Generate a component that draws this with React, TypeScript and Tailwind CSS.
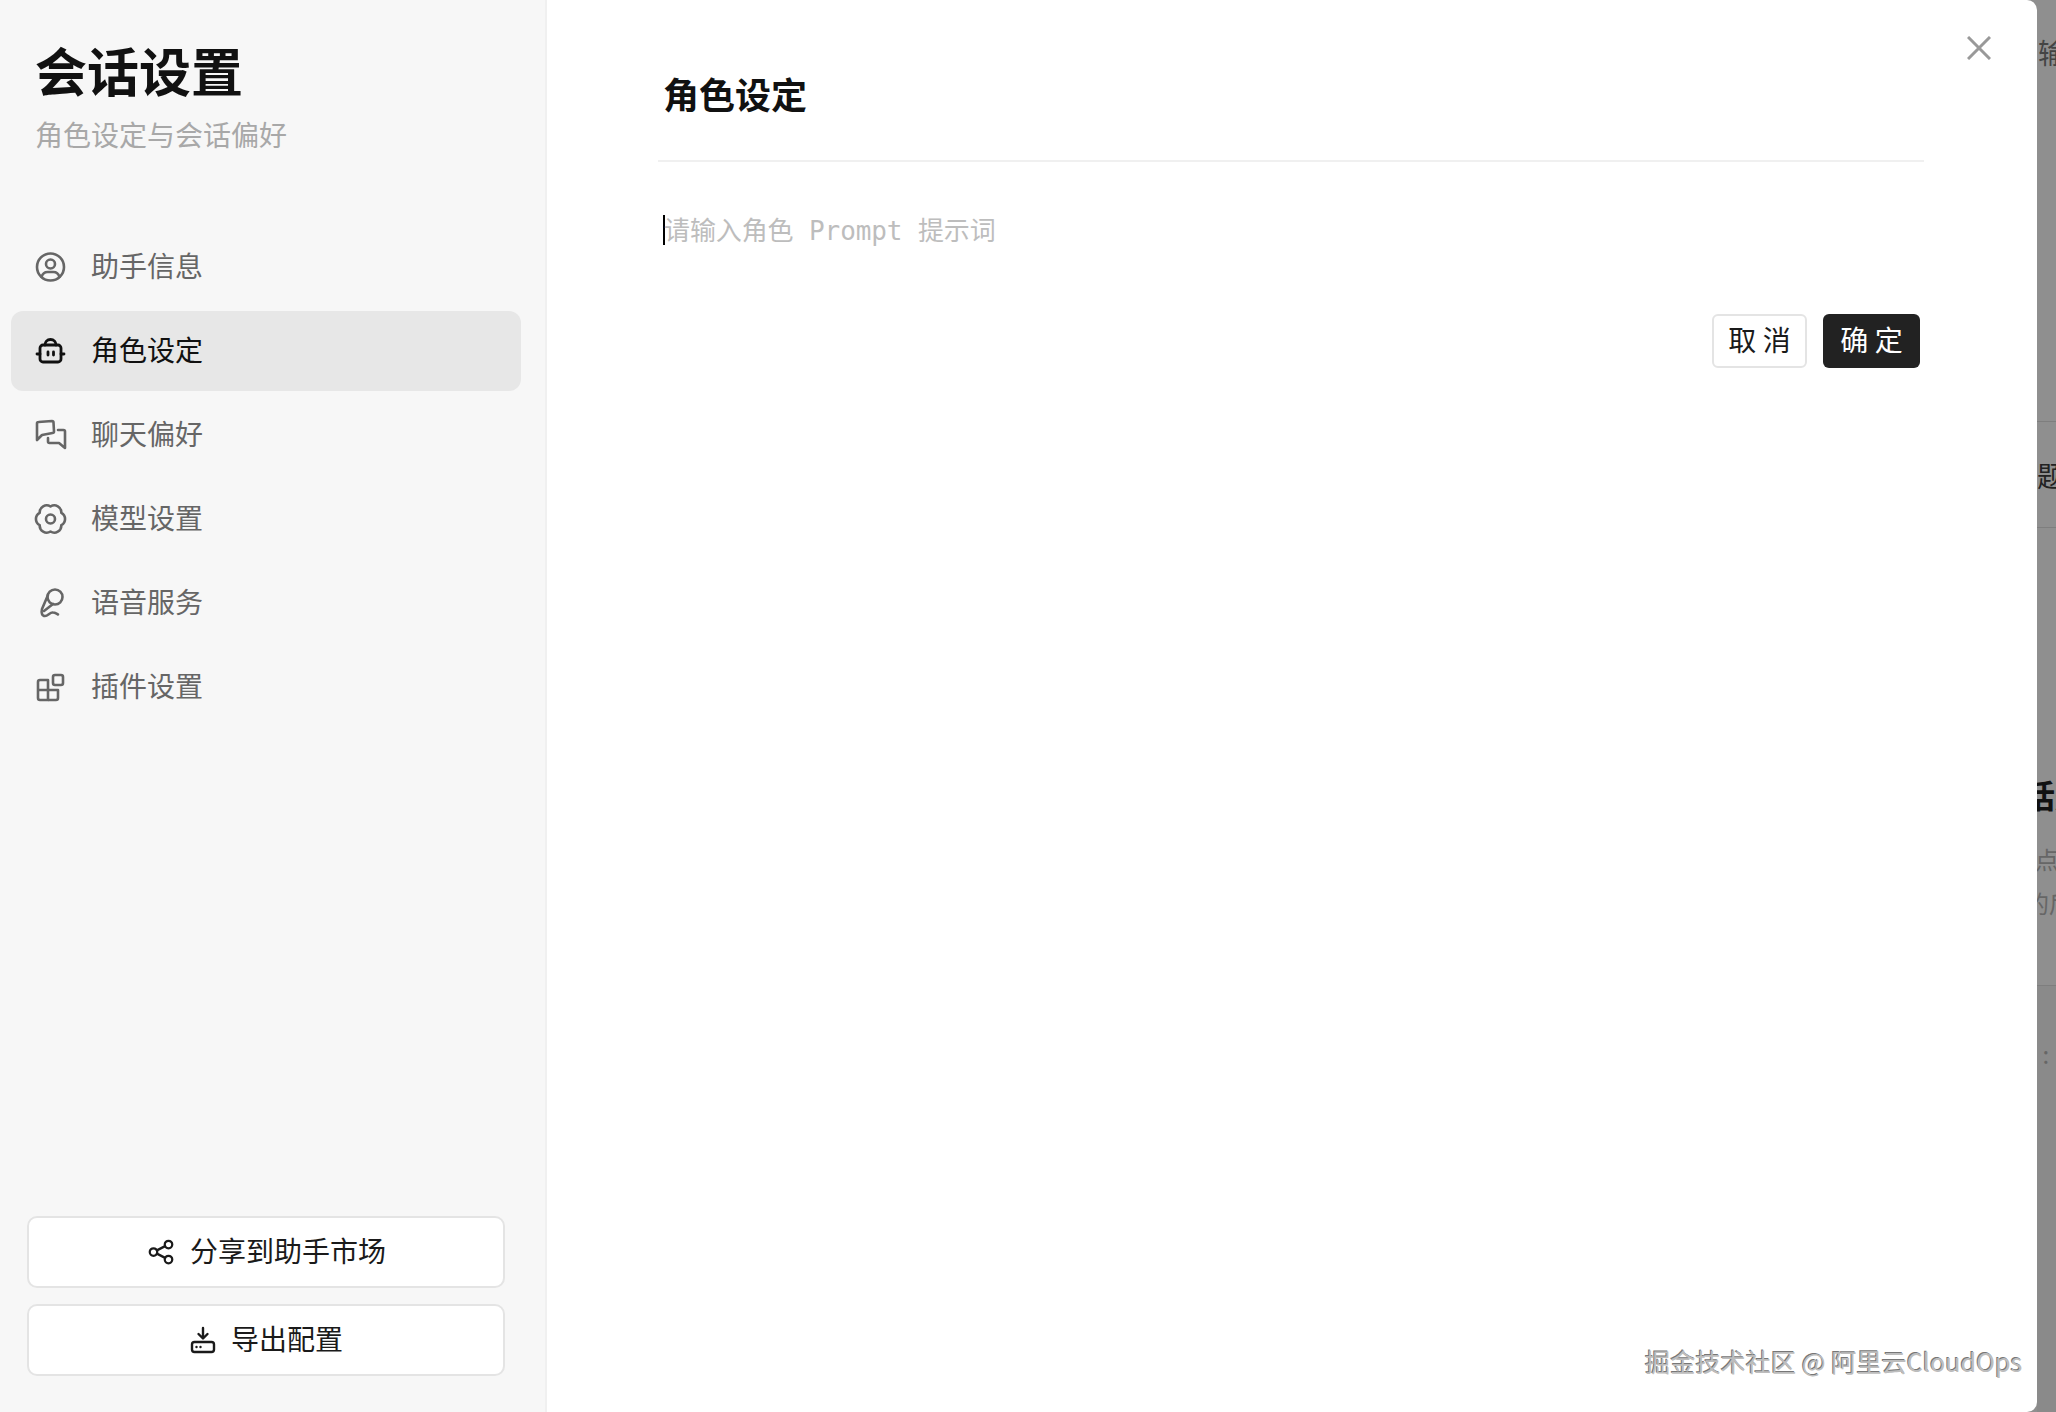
import { TbShare } from 'react-icons/tb';

const CJK = "font-['Noto_Sans_CJK_SC','Noto_Sans',sans-serif]";

type IconProps = { className?: string };

function UserIcon({ className }: IconProps) {
  return (
    <svg viewBox="0 0 36 36" fill="none" stroke="currentColor" strokeWidth="2.600" strokeLinecap="round" strokeLinejoin="round" className={className}>
      <circle cx="19.500" cy="18" r="13.500" />
      <circle cx="19.500" cy="15" r="4.500" />
      <path d="M10.500 28c1-3 3.500-5 6-5h6c2.500 0 5 2 6 5" />
    </svg>
  );
}

function RobotIcon({ className }: IconProps) {
  return (
    <svg viewBox="0 0 36 36" fill="none" stroke="currentColor" strokeWidth="2.800" strokeLinecap="round" strokeLinejoin="round" className={className}>
      <rect x="9" y="12" width="21" height="17" rx="3" />
      <path d="M14 12c0-3 2-5.500 5.500-5.500S25 9 25 12" />
      <path d="M6 21h3M30 21h3M17 19v3M22.500 19v3" />
    </svg>
  );
}

function ChatIcon({ className }: IconProps) {
  return (
    <svg viewBox="0 0 36 36" fill="none" stroke="currentColor" strokeWidth="2.600" strokeLinecap="round" strokeLinejoin="round" className={className}>
      <path d="M6 23V6.500C6 5.500 6.500 5 7.500 5L21 4c1 0 1.500.5 1.500 1.500l.5 9c0 1-.5 1.500-1.500 1.500L11 18z" />
      <path d="M27 13h5.500c1 0 1.500.5 1.500 1.500V31l-6-5H18.500c-1 0-1.500-.5-1.500-1.500V21" />
    </svg>
  );
}

function GearIcon({ className }: IconProps) {
  return (
    <svg viewBox="0 0 36 36" fill="none" stroke="currentColor" strokeWidth="2.600" strokeLinejoin="round" className={className}>
      <path d="M19.500 5.500A7 7 0 0 1 30.300 11.800A7 7 0 0 1 30.300 24.200A7 7 0 0 1 19.500 30.500A7 7 0 0 1 8.700 24.200A7 7 0 0 1 8.700 11.800A7 7 0 0 1 19.500 5.500Z" />
      <circle cx="19.500" cy="18" r="4.500" />
    </svg>
  );
}

function MicIcon({ className }: IconProps) {
  return (
    <svg viewBox="0 0 36 36" fill="none" stroke="currentColor" strokeWidth="2.600" strokeLinecap="round" strokeLinejoin="round" className={className}>
      <circle cx="24" cy="12" r="7.500" />
      <path d="M17 10l-6 14c-1 4 0 7 3 7s5-4 8-3.500c2 0 3 1 5 2" />
      <path d="M13 26l9-7" />
    </svg>
  );
}

function PluginIcon({ className }: IconProps) {
  return (
    <svg viewBox="0 0 36 36" fill="none" stroke="currentColor" strokeWidth="2.600" strokeLinejoin="round" className={className}>
      <path d="M9 11h8v20H9a2 2 0 0 1-2-2V13a2 2 0 0 1 2-2z" />
      <path d="M7 21h20v8a2 2 0 0 1-2 2h-8" />
      <rect x="22" y="6" width="10" height="10" rx="2" />
    </svg>
  );
}

function ExportIcon({ className }: IconProps) {
  return (
    <svg viewBox="0 0 28 28" fill="none" stroke="currentColor" strokeWidth="2.400" strokeLinecap="round" strokeLinejoin="round" className={className}>
      <path d="M14 2v10M9.500 8l4.500 4.500L18.500 8" />
      <rect x="3" y="16" width="22" height="10" rx="2.500" />
      <path d="M7.500 21h.01M11.500 21h.01" />
    </svg>
  );
}

const NAV = [
  { label: '助手信息', Icon: UserIcon },
  { label: '角色设定', Icon: RobotIcon, active: true },
  { label: '聊天偏好', Icon: ChatIcon },
  { label: '模型设置', Icon: GearIcon },
  { label: '语音服务', Icon: MicIcon },
  { label: '插件设置', Icon: PluginIcon },
];

export default function App() {
  return (
    <div className={`relative flex h-[1412px] w-[2056px] overflow-hidden bg-[#8f8f8f] ${CJK}`}>
      {/* Drawer */}
      <div className="flex h-full w-[2037px] shrink-0 overflow-hidden rounded-r-[10px] bg-white">
        <aside className="flex h-full w-[547px] shrink-0 flex-col border-r-2 border-[#f0f0f0] bg-[#f7f7f7]">
          <div className="pl-[35px] pt-[36px]">
            <h1 className="text-[52px] font-bold leading-[68px] text-[#111]">会话设置</h1>
            <p className="mt-[10px] text-[28px] leading-[40px] text-[#a8a8a8]">角色设定与会话偏好</p>
          </div>

          <nav className="ml-[11px] mt-[73px] flex w-[510px] flex-col gap-[4px]">
            {NAV.map(({ label, Icon, active }) => (
              <div
                key={label}
                className={`flex h-[80px] items-center gap-[24px] rounded-[12px] pl-[20px] ${active ? 'bg-[#e7e7e7] text-[#111]' : 'text-[#666]'}`}
              >
                <Icon className="h-[36px] w-[36px] shrink-0" />
                <span className="pb-[4px] text-[28px] leading-[40px]">{label}</span>
              </div>
            ))}
          </nav>

          <div className="ml-[27px] mt-auto mb-[36px] flex w-[478px] flex-col gap-[16px]">
            <button className="flex h-[72px] items-center justify-center gap-[14px] rounded-[10px] border-2 border-[#e4e4e4] bg-white text-[28px] text-[#1a1a1a]">
              <TbShare strokeWidth={1.800} className="h-[30px] w-[30px]" />
              <span className="pb-[4px]">分享到助手市场</span>
            </button>
            <button className="flex h-[72px] items-center justify-center gap-[14px] rounded-[10px] border-2 border-[#e4e4e4] bg-white text-[28px] text-[#1a1a1a]">
              <ExportIcon className="h-[28px] w-[28px]" />
              <span className="pb-[4px]">导出配置</span>
            </button>
          </div>
        </aside>

        <main className="flex-1 pl-[111px] pr-[113px]">
          <h2 className="pl-[5px] pt-[67px] text-[36px] font-bold leading-[52px] text-[#111]">角色设定</h2>
          <div className="mt-[41px] h-[2px] bg-[#f0f0f0]" />
          <div className="mt-[53px] flex h-[30px] items-center pl-[5px]">
            <span className="-mr-[1px] h-[30px] w-[2px] shrink-0 bg-black" />
            <span className="pt-[2px] font-['DejaVu_Sans_Mono','Noto_Sans_CJK_SC',monospace] text-[26px] tracking-[-0.1px] text-[#bdbdbd]">请输入角色 Prompt 提示词</span>
          </div>
          <div className="mt-[69px] flex justify-end gap-[16px] pr-[4px]">
            <button className="h-[54px] w-[95px] rounded-[6px] border-2 border-[#e4e4e4] bg-white pb-[4px] text-[28px] text-[#1a1a1a]">取 消</button>
            <button className="h-[54px] w-[97px] rounded-[6px] bg-[#222] pb-[4px] text-[28px] text-white">确 定</button>
          </div>
        </main>
      </div>

      {/* Page behind the drawer */}
      <div className="flex h-full flex-1 flex-col overflow-hidden whitespace-nowrap text-[#333]">
        <div className="h-[422px] shrink-0 border-b border-[#7e7e7e] pl-[1px] pt-[32px] text-[28px] leading-[40px] text-[#444]">输入</div>
        <div className="flex h-[106px] shrink-0 items-center border-b border-[#7e7e7e] text-[28px] text-[#222]">题目</div>
        <div className="h-[458px] shrink-0 border-b border-[#7e7e7e] pt-[242px]">
          <div className="-ml-[14px] text-[32px] font-bold leading-[48px] text-[#111]">话题</div>
          <div className="mt-[19px] -ml-[2px] text-[24px] leading-[44px] text-[#666]">点击</div>
          <div className="-ml-[12px] text-[24px] leading-[44px] text-[#666]">的后</div>
        </div>
        <div className="flex-1 bg-[#8a8a8a] pt-[50px] text-[24px] text-[#666]">&nbsp;:</div>
      </div>

      {/* Close button */}
      <svg viewBox="0 0 24 24" fill="none" stroke="#999" strokeWidth="3" className="absolute left-[1967px] top-[36px] h-[24px] w-[24px]">
        <path d="M1 1l22 22M23 1L1 23" />
      </svg>

      {/* Watermark */}
      <div className="absolute left-[1645px] top-[1342px] text-[25.200px] leading-[38px] text-[#bdbdbd] [text-shadow:-1px_-1px_0_#777]">
        掘金技术社区 @ 阿里云CloudOps
      </div>
    </div>
  );
}
